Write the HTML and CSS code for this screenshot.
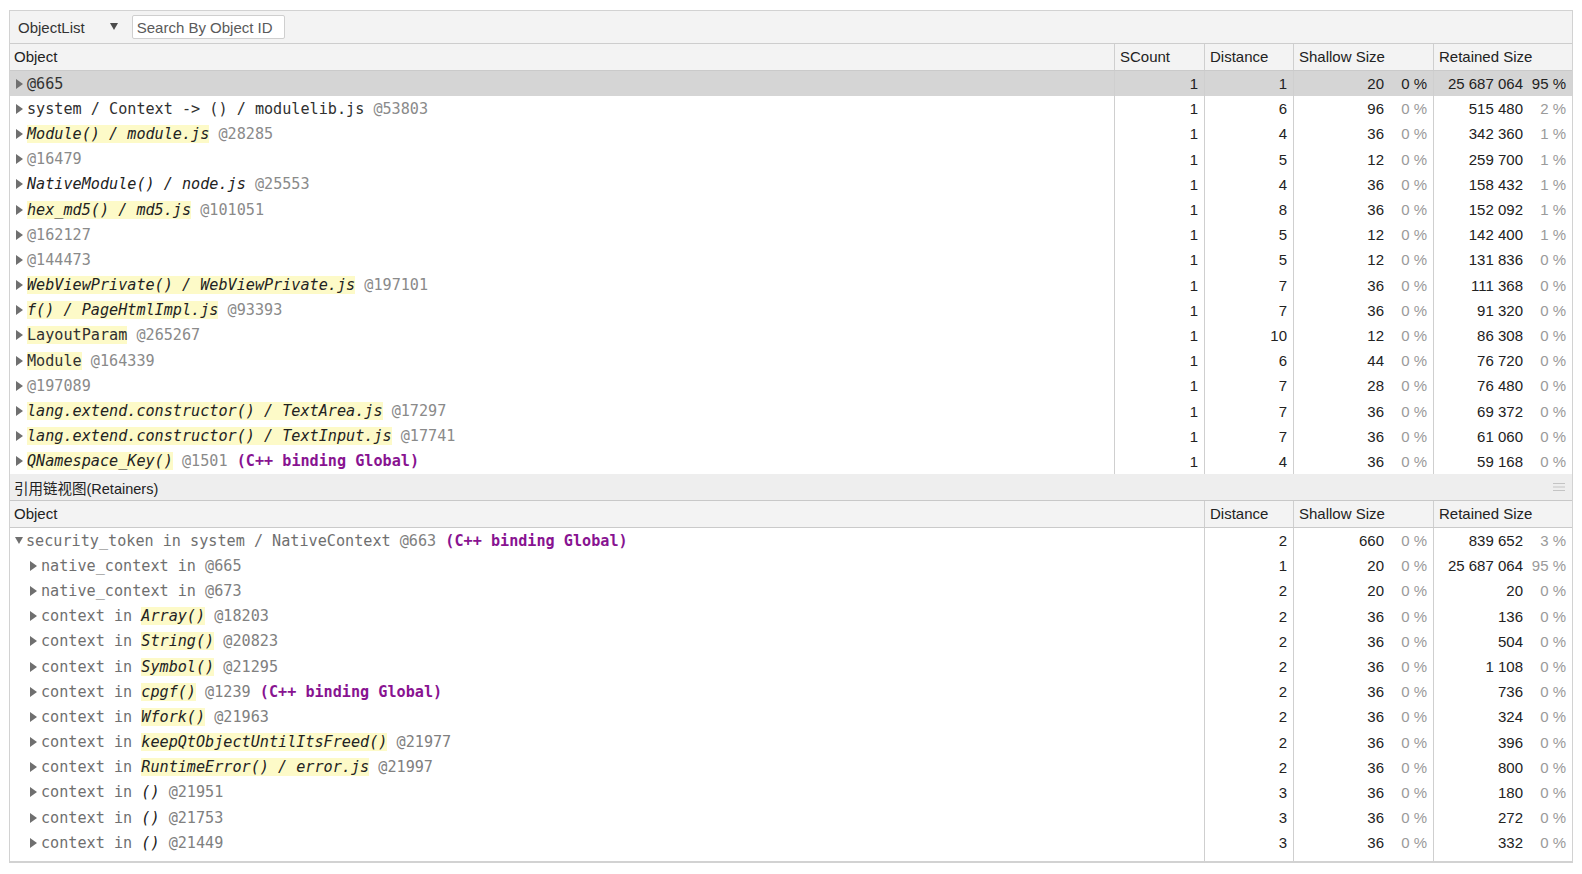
FILE: index.html
```html
<!DOCTYPE html>
<html>
<head>
<meta charset="utf-8">
<link rel="stylesheet" href="styles.css">
</head>
<body>
<div class="panel">
  <div class="toolbar">
    <span class="tb-label">ObjectList</span>
    <i class="tb-arrow"></i>
    <input class="search" type="text" placeholder="Search By Object ID">
  </div>

  <div class="top">
    <div class="thead cols-top">
      <div class="hcell">Object</div>
      <div class="hcell">SCount</div>
      <div class="hcell">Distance</div>
      <div class="hcell">Shallow Size</div>
      <div class="hcell">Retained Size</div>
    </div>

    <div class="row cols-top sel">
      <div class="cell obj"><i class="tri"></i><span class="txt"><span class="id">@665</span></span></div>
      <div class="cell num">1</div><div class="cell num">1</div>
      <div class="cell sz"><span>20</span><span class="pct">0 %</span></div>
      <div class="cell sz"><span>25 687 064</span><span class="pct">95 %</span></div>
    </div>
    <div class="row cols-top">
      <div class="cell obj"><i class="tri"></i><span class="txt">system / Context -&gt; () / modulelib.js <span class="id">@53803</span></span></div>
      <div class="cell num">1</div><div class="cell num">6</div>
      <div class="cell sz"><span>96</span><span class="pct">0 %</span></div>
      <div class="cell sz"><span>515 480</span><span class="pct">2 %</span></div>
    </div>
    <div class="row cols-top">
      <div class="cell obj"><i class="tri"></i><span class="txt"><span class="nm hl">Module() / module.js</span> <span class="id">@28285</span></span></div>
      <div class="cell num">1</div><div class="cell num">4</div>
      <div class="cell sz"><span>36</span><span class="pct">0 %</span></div>
      <div class="cell sz"><span>342 360</span><span class="pct">1 %</span></div>
    </div>
    <div class="row cols-top">
      <div class="cell obj"><i class="tri"></i><span class="txt"><span class="id">@16479</span></span></div>
      <div class="cell num">1</div><div class="cell num">5</div>
      <div class="cell sz"><span>12</span><span class="pct">0 %</span></div>
      <div class="cell sz"><span>259 700</span><span class="pct">1 %</span></div>
    </div>
    <div class="row cols-top">
      <div class="cell obj"><i class="tri"></i><span class="txt"><span class="nm">NativeModule() / node.js</span> <span class="id">@25553</span></span></div>
      <div class="cell num">1</div><div class="cell num">4</div>
      <div class="cell sz"><span>36</span><span class="pct">0 %</span></div>
      <div class="cell sz"><span>158 432</span><span class="pct">1 %</span></div>
    </div>
    <div class="row cols-top">
      <div class="cell obj"><i class="tri"></i><span class="txt"><span class="nm hl">hex_md5() / md5.js</span> <span class="id">@101051</span></span></div>
      <div class="cell num">1</div><div class="cell num">8</div>
      <div class="cell sz"><span>36</span><span class="pct">0 %</span></div>
      <div class="cell sz"><span>152 092</span><span class="pct">1 %</span></div>
    </div>
    <div class="row cols-top">
      <div class="cell obj"><i class="tri"></i><span class="txt"><span class="id">@162127</span></span></div>
      <div class="cell num">1</div><div class="cell num">5</div>
      <div class="cell sz"><span>12</span><span class="pct">0 %</span></div>
      <div class="cell sz"><span>142 400</span><span class="pct">1 %</span></div>
    </div>
    <div class="row cols-top">
      <div class="cell obj"><i class="tri"></i><span class="txt"><span class="id">@144473</span></span></div>
      <div class="cell num">1</div><div class="cell num">5</div>
      <div class="cell sz"><span>12</span><span class="pct">0 %</span></div>
      <div class="cell sz"><span>131 836</span><span class="pct">0 %</span></div>
    </div>
    <div class="row cols-top">
      <div class="cell obj"><i class="tri"></i><span class="txt"><span class="nm hl">WebViewPrivate() / WebViewPrivate.js</span> <span class="id">@197101</span></span></div>
      <div class="cell num">1</div><div class="cell num">7</div>
      <div class="cell sz"><span>36</span><span class="pct">0 %</span></div>
      <div class="cell sz"><span>111 368</span><span class="pct">0 %</span></div>
    </div>
    <div class="row cols-top">
      <div class="cell obj"><i class="tri"></i><span class="txt"><span class="nm hl">f() / PageHtmlImpl.js</span> <span class="id">@93393</span></span></div>
      <div class="cell num">1</div><div class="cell num">7</div>
      <div class="cell sz"><span>36</span><span class="pct">0 %</span></div>
      <div class="cell sz"><span>91 320</span><span class="pct">0 %</span></div>
    </div>
    <div class="row cols-top">
      <div class="cell obj"><i class="tri"></i><span class="txt"><span class="hl">LayoutParam</span> <span class="id">@265267</span></span></div>
      <div class="cell num">1</div><div class="cell num">10</div>
      <div class="cell sz"><span>12</span><span class="pct">0 %</span></div>
      <div class="cell sz"><span>86 308</span><span class="pct">0 %</span></div>
    </div>
    <div class="row cols-top">
      <div class="cell obj"><i class="tri"></i><span class="txt"><span class="hl">Module</span> <span class="id">@164339</span></span></div>
      <div class="cell num">1</div><div class="cell num">6</div>
      <div class="cell sz"><span>44</span><span class="pct">0 %</span></div>
      <div class="cell sz"><span>76 720</span><span class="pct">0 %</span></div>
    </div>
    <div class="row cols-top">
      <div class="cell obj"><i class="tri"></i><span class="txt"><span class="id">@197089</span></span></div>
      <div class="cell num">1</div><div class="cell num">7</div>
      <div class="cell sz"><span>28</span><span class="pct">0 %</span></div>
      <div class="cell sz"><span>76 480</span><span class="pct">0 %</span></div>
    </div>
    <div class="row cols-top">
      <div class="cell obj"><i class="tri"></i><span class="txt"><span class="nm hl">lang.extend.constructor() / TextArea.js</span> <span class="id">@17297</span></span></div>
      <div class="cell num">1</div><div class="cell num">7</div>
      <div class="cell sz"><span>36</span><span class="pct">0 %</span></div>
      <div class="cell sz"><span>69 372</span><span class="pct">0 %</span></div>
    </div>
    <div class="row cols-top">
      <div class="cell obj"><i class="tri"></i><span class="txt"><span class="nm hl">lang.extend.constructor() / TextInput.js</span> <span class="id">@17741</span></span></div>
      <div class="cell num">1</div><div class="cell num">7</div>
      <div class="cell sz"><span>36</span><span class="pct">0 %</span></div>
      <div class="cell sz"><span>61 060</span><span class="pct">0 %</span></div>
    </div>
    <div class="row cols-top">
      <div class="cell obj"><i class="tri"></i><span class="txt"><span class="nm hl">QNamespace_Key()</span> <span class="id">@1501</span> <span class="cb">(C++ binding Global)</span></span></div>
      <div class="cell num">1</div><div class="cell num">4</div>
      <div class="cell sz"><span>36</span><span class="pct">0 %</span></div>
      <div class="cell sz"><span>59 168</span><span class="pct">0 %</span></div>
    </div>
  </div>

  <div class="band">
    <span class="band-title">引用链视图(Retainers)</span>
    <svg class="grip" width="12" height="10" viewBox="0 0 12 10"><path d="M0 1.5H12M0 5H12M0 8.5H12" stroke="#c4c4c4" stroke-width="1.2" fill="none"/></svg>
  </div>

  <div class="bottom">
    <div class="thead cols-bot">
      <div class="hcell">Object</div>
      <div class="hcell">Distance</div>
      <div class="hcell">Shallow Size</div>
      <div class="hcell">Retained Size</div>
    </div>

    <div class="row cols-bot">
      <div class="cell obj"><i class="tri open"></i><span class="txt">security_token in system / NativeContext <span class="id">@663</span> <span class="cb">(C++ binding Global)</span></span></div>
      <div class="cell num">2</div>
      <div class="cell sz"><span>660</span><span class="pct">0 %</span></div>
      <div class="cell sz"><span>839 652</span><span class="pct">3 %</span></div>
    </div>
    <div class="row cols-bot">
      <div class="cell obj child"><i class="tri"></i><span class="txt">native_context in <span class="id">@665</span></span></div>
      <div class="cell num">1</div>
      <div class="cell sz"><span>20</span><span class="pct">0 %</span></div>
      <div class="cell sz"><span>25 687 064</span><span class="pct">95 %</span></div>
    </div>
    <div class="row cols-bot">
      <div class="cell obj child"><i class="tri"></i><span class="txt">native_context in <span class="id">@673</span></span></div>
      <div class="cell num">2</div>
      <div class="cell sz"><span>20</span><span class="pct">0 %</span></div>
      <div class="cell sz"><span>20</span><span class="pct">0 %</span></div>
    </div>
    <div class="row cols-bot">
      <div class="cell obj child"><i class="tri"></i><span class="txt">context in <span class="nm hl">Array()</span> <span class="id">@18203</span></span></div>
      <div class="cell num">2</div>
      <div class="cell sz"><span>36</span><span class="pct">0 %</span></div>
      <div class="cell sz"><span>136</span><span class="pct">0 %</span></div>
    </div>
    <div class="row cols-bot">
      <div class="cell obj child"><i class="tri"></i><span class="txt">context in <span class="nm hl">String()</span> <span class="id">@20823</span></span></div>
      <div class="cell num">2</div>
      <div class="cell sz"><span>36</span><span class="pct">0 %</span></div>
      <div class="cell sz"><span>504</span><span class="pct">0 %</span></div>
    </div>
    <div class="row cols-bot">
      <div class="cell obj child"><i class="tri"></i><span class="txt">context in <span class="nm hl">Symbol()</span> <span class="id">@21295</span></span></div>
      <div class="cell num">2</div>
      <div class="cell sz"><span>36</span><span class="pct">0 %</span></div>
      <div class="cell sz"><span>1 108</span><span class="pct">0 %</span></div>
    </div>
    <div class="row cols-bot">
      <div class="cell obj child"><i class="tri"></i><span class="txt">context in <span class="nm hl">cpgf()</span> <span class="id">@1239</span> <span class="cb">(C++ binding Global)</span></span></div>
      <div class="cell num">2</div>
      <div class="cell sz"><span>36</span><span class="pct">0 %</span></div>
      <div class="cell sz"><span>736</span><span class="pct">0 %</span></div>
    </div>
    <div class="row cols-bot">
      <div class="cell obj child"><i class="tri"></i><span class="txt">context in <span class="nm hl">Wfork()</span> <span class="id">@21963</span></span></div>
      <div class="cell num">2</div>
      <div class="cell sz"><span>36</span><span class="pct">0 %</span></div>
      <div class="cell sz"><span>324</span><span class="pct">0 %</span></div>
    </div>
    <div class="row cols-bot">
      <div class="cell obj child"><i class="tri"></i><span class="txt">context in <span class="nm hl">keepQtObjectUntilItsFreed()</span> <span class="id">@21977</span></span></div>
      <div class="cell num">2</div>
      <div class="cell sz"><span>36</span><span class="pct">0 %</span></div>
      <div class="cell sz"><span>396</span><span class="pct">0 %</span></div>
    </div>
    <div class="row cols-bot">
      <div class="cell obj child"><i class="tri"></i><span class="txt">context in <span class="nm hl">RuntimeError() / error.js</span> <span class="id">@21997</span></span></div>
      <div class="cell num">2</div>
      <div class="cell sz"><span>36</span><span class="pct">0 %</span></div>
      <div class="cell sz"><span>800</span><span class="pct">0 %</span></div>
    </div>
    <div class="row cols-bot">
      <div class="cell obj child"><i class="tri"></i><span class="txt">context in <span class="nm">()</span> <span class="id">@21951</span></span></div>
      <div class="cell num">3</div>
      <div class="cell sz"><span>36</span><span class="pct">0 %</span></div>
      <div class="cell sz"><span>180</span><span class="pct">0 %</span></div>
    </div>
    <div class="row cols-bot">
      <div class="cell obj child"><i class="tri"></i><span class="txt">context in <span class="nm">()</span> <span class="id">@21753</span></span></div>
      <div class="cell num">3</div>
      <div class="cell sz"><span>36</span><span class="pct">0 %</span></div>
      <div class="cell sz"><span>272</span><span class="pct">0 %</span></div>
    </div>
    <div class="row cols-bot">
      <div class="cell obj child"><i class="tri"></i><span class="txt">context in <span class="nm">()</span> <span class="id">@21449</span></span></div>
      <div class="cell num">3</div>
      <div class="cell sz"><span>36</span><span class="pct">0 %</span></div>
      <div class="cell sz"><span>332</span><span class="pct">0 %</span></div>
    </div>
    <div class="row cols-bot">
      <div class="cell obj child"><i class="tri"></i><span class="txt">context in <span class="nm">()</span> <span class="id">@21445</span></span></div>
      <div class="cell num">3</div>
      <div class="cell sz"><span>36</span><span class="pct">0 %</span></div>
      <div class="cell sz"><span>264</span><span class="pct">0 %</span></div>
    </div>
  </div>
</div>
</body>
</html>
```

FILE: styles.css
```css
* { box-sizing: border-box; }
html, body { margin: 0; padding: 0; background: #fff; }
body {
  font-family: "Liberation Sans", Arial, sans-serif;
  font-size: 15px;
  color: #222;
}

.panel {
  margin: 10px 9px 0 9px;
  width: 1564px;
  height: 853px;
  border: 1px solid #d2d2d2;
  border-bottom-width: 2px;
  display: flex;
  flex-direction: column;
  overflow: hidden;
  background: #fff;
}

/* toolbar */
.toolbar {
  flex: none;
  height: 33px;
  background: #f3f3f3;
  border-bottom: 1px solid #cdcdcd;
  display: flex;
  align-items: center;
  padding-left: 8px;
}
.tb-label { color: #333; }
.tb-arrow {
  display: inline-block;
  width: 0; height: 0;
  border-top: 7px solid #4a4a4a;
  border-left: 4px solid transparent;
  border-right: 4px solid transparent;
  margin-left: 25px;
  margin-top: -2px;
}
.search {
  margin-left: 14px;
  width: 153px;
  height: 24px;
  border: 1px solid #cfcfcf;
  border-radius: 2px;
  background: #fff;
  padding: 0 0 0 4px;
  font-family: "Liberation Sans", Arial, sans-serif;
  font-size: 15px;
  color: #333;
  outline: none;
}
.search::placeholder { color: #5a5a5a; }

/* grids */
.cols-top { display: grid; grid-template-columns: 1104px 90px 89px 140px 139px; }
.cols-bot { display: grid; grid-template-columns: 1194px 89px 140px 139px; }

.thead {
  height: 27px;
  background: #f3f3f3;
  border-bottom: 1px solid #cacaca;
}
.hcell {
  display: flex;
  align-items: center;
  padding-left: 4px;
  padding-bottom: 1px;
  color: #222;
  white-space: nowrap;
}
.hcell + .hcell { border-left: 1px solid #cfcfcf; padding-left: 5px; }

.top { flex: none; }

.row { height: 25.2px; }
.row.sel { background: #d5d5d5; }

.cell {
  display: flex;
  align-items: center;
  white-space: nowrap;
  overflow: hidden;
}
.cell + .cell { border-left: 1px solid #cfcfcf; }

.num { justify-content: flex-end; padding-right: 6px; }
.sz { justify-content: flex-end; padding-right: 6px; }
.pct { width: 36px; margin-left: 7px; text-align: right; color: #9a9a9a; }
.sel .pct { color: #222; }

/* object column */
.obj { padding-left: 6px; }
.obj.child { padding-left: 20px; }
.tri {
  flex: none;
  display: inline-block;
  width: 0; height: 0;
  border-left: 7px solid #6f6f6f;
  border-top: 5px solid transparent;
  border-bottom: 5px solid transparent;
  margin-right: 4px;
}
.tri.open {
  border-left: 4.5px solid transparent;
  border-right: 4.5px solid transparent;
  border-top: 7px solid #6f6f6f;
  border-bottom: 0;
  margin-left: -1px;
  margin-right: 3px;
}
.txt {
  font-family: "DejaVu Sans Mono", "Liberation Mono", monospace;
  font-size: 15.15px;
  color: #303030;
}
.nm { font-style: italic; color: #222; }
.hl { background: #fdfac8; }
.id { color: #8a8a8a; }
.sel .id { color: #333; }
.cb { color: #881391; font-weight: bold; }

/* band */
.band {
  flex: none;
  height: 27px;
  background: #eeeeee;
  border-bottom: 1px solid #c8c8c8;
  display: flex;
  align-items: center;
  justify-content: space-between;
  padding: 0 7px 0 4px;
}
.band-title {
  font-family: "Liberation Sans", "Noto Sans CJK SC", Arial, sans-serif;
  font-size: 14.5px;
  color: #222;
}

/* bottom */
.bottom { flex: 1; overflow: hidden; }
.bottom .txt { color: #6f6f6f; }
.bottom .nm { color: #222; }
.bottom .id { color: #808080; }
.bottom .cb { color: #881391; }
```
